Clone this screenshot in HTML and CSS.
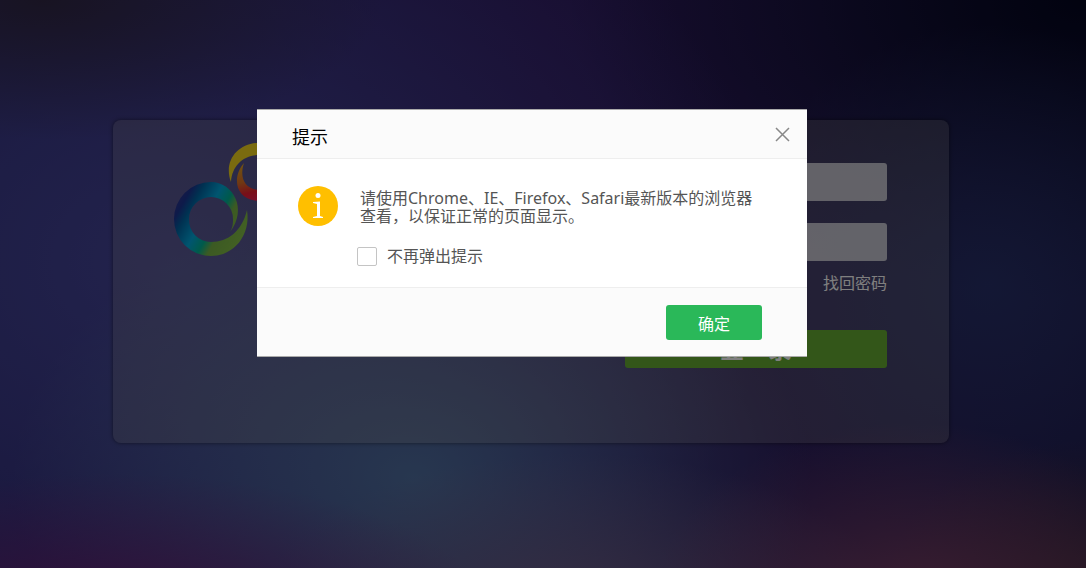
FILE: index.html
```
<!DOCTYPE html>
<html lang="zh-CN">
    <head>
        <meta charset="utf-8">
        <title>登录</title>
        <link rel="stylesheet" href="styles.css">
    </head>
    <body>
        <main class="page">
            <div class="login-box">
                <svg class="logo" viewBox="0 0 120 116" aria-hidden="true">
                    <defs>
                        <linearGradient id="blue" gradientUnits="userSpaceOnUse" x1="0" y1="0" x2="96" y2="55">
                            <stop offset="0.28" stop-color="#2c3590"/>
                            <stop offset="0.34" stop-color="#1c3494"/>
                            <stop offset="0.42" stop-color="#0064a4"/>
                            <stop offset="0.57" stop-color="#00aae0"/>
                            <stop offset="0.68" stop-color="#00b496"/>
                            <stop offset="0.76" stop-color="#78b446"/>
                            <stop offset="1" stop-color="#88c448"/>
                        </linearGradient>
                        <linearGradient id="red" gradientUnits="userSpaceOnUse" x1="66" y1="20" x2="76" y2="58">
                            <stop offset="0" stop-color="#e6aa20"/>
                            <stop offset="0.5" stop-color="#e07028"/>
                            <stop offset="0.8" stop-color="#f01e32"/>
                            <stop offset="1" stop-color="#f01e50"/>
                        </linearGradient>
                    </defs>
                    <path fill="url(#blue)" d="M56 89C59 84 59 80 59 76A22 22 0 0 0 37 54A22 22 0 0 0 15 76A22 22 0 0 0 37 99C54 99 68 88 73 67C77 92 60 113 37 113A37 37 0 0 1 0 76A37 37 0 0 1 37 39C59 39 74 66 56 89Z"/>
                    <path fill="#f5d71e" d="M57 39C49 18 64 0 85 0V12C70 12 58 22 57 39Z"/>
                    <path fill="url(#red)" d="M70 20C58 33 60 58 86 58V47C71 47 65 35 70 20Z"/>
                </svg>
                <form class="login-form">
                    <input class="field" type="text" aria-label="用户名">
                    <input class="field" type="password" aria-label="密码">
                    <a class="forgot" href="#">找回密码</a>
                    <button class="login-btn" type="button">登　录</button>
                </form>
            </div>
        </main>
        <div class="overlay">
            <section class="dialog" role="dialog" aria-labelledby="dialog-title">
                <header class="dialog-header">
                    <h2 class="dialog-title" id="dialog-title">提示</h2>
                    <button class="close" type="button" aria-label="关闭">
                        <svg width="15" height="15" viewBox="0 0 15 15"><path d="M1 1L14 14M14 1L1 14" stroke="#888" stroke-width="1.5"/></svg>
                    </button>
                </header>
                <div class="dialog-body">
                    <svg class="info" width="40" height="40" viewBox="0 0 40 40" aria-hidden="true">
                        <circle cx="20" cy="20" r="20" fill="#ffbf00"/>
                        <circle cx="20" cy="9.500" r="2.500" fill="#fff"/>
                        <path fill="#fff" d="M15 16L22 15.500V30L25 31V32H15V31L19 30V18L15 17Z"/>
                    </svg>
                    <div class="message">
                        <p class="text">请使用Chrome、IE、Firefox、Safari最新版本的浏览器查看，以保证正常的页面显示。</p>
                        <label class="no-more"><input class="check" type="checkbox">不再弹出提示</label>
                    </div>
                </div>
                <footer class="dialog-footer">
                    <button class="ok" type="button">确定</button>
                </footer>
            </section>
        </div>
    </body>
</html>
```
FILE: styles.css
```
*{
    box-sizing: border-box;
}
body{
    margin: 0;
    font-family: "Noto Sans", "Noto Sans CJK SC", sans-serif;
    font-size: 16px;
}
button,
input{
    font-family: inherit;
}

/* 登录页 */
.page{
    min-height: 100vh;
    padding: 120px 24px 0 0;
    background:
        radial-gradient(ellipse 260px 180px at 84% 106%, rgba(132,66,100,0.85), rgba(132,66,100,0)),
        radial-gradient(ellipse 200px 150px at 100% 104%, rgba(76,48,64,0.9), rgba(76,48,64,0)),
        radial-gradient(ellipse 380px 140px at 10% 108%, rgba(112,28,112,0.8), rgba(112,28,112,0)),
        radial-gradient(ellipse 320px 160px at 53% 108%, rgba(120,100,136,0.8), rgba(120,100,136,0)),
        radial-gradient(ellipse 400px 280px at 38% 84%, rgba(82,118,164,0.9), rgba(82,118,164,0)),
        radial-gradient(ellipse 340px 140px at 4% 0, rgba(48,38,62,0.9), rgba(48,38,62,0)),
        radial-gradient(ellipse 600px 460px at 16% 46%, rgba(72,74,160,0.9), rgba(72,74,160,0)),
        radial-gradient(ellipse 260px 260px at 91% 50%, rgba(40,52,110,0.8), rgba(40,52,110,0)),
        radial-gradient(ellipse 520px 300px at 100% 0, rgba(4,6,32,1), rgba(4,6,32,0)),
        linear-gradient(90deg, #2c2870 0, #301a60 50%, #2c1e5c 75%, #201c50 100%);
}
.login-box{
    display: flex;
    justify-content: space-between;
    max-width: 836px;
    min-height: 323px;
    margin: 0 auto;
    padding: 23px 62px 20px 61px;
    border-radius: 8px;
    background: rgba(156,150,142,0.25);
    box-shadow: 0 0 4px rgba(0,0,0,0.5);
}
.logo{
    width: 120px;
    height: 116px;
}
.login-form{
    display: flex;
    flex-direction: column;
    width: 262px;
    padding-top: 20px;
}
.field{
    height: 38px;
    margin-bottom: 22px;
    padding: 0 10px;
    border: 0;
    border-radius: 3px;
    background: rgba(255,255,255,0.7);
}
.forgot{
    align-self: flex-end;
    margin-top: -12px;
    line-height: 24px;
    color: #fff;
    text-decoration: none;
}
.login-btn{
    height: 38px;
    margin-top: 35px;
    padding: 0;
    border: 0;
    border-radius: 3px;
    background: #66ad33;
    color: #fff;
    font-size: 24px;
    font-weight: bold;
    line-height: 38px;
}

/* 提示弹窗 */
.overlay{
    position: fixed;
    inset: 0;
    padding: 109px 22px 0 0;
    background: rgba(0,0,0,0.5);
}
.dialog{
    max-width: 550px;
    margin: 0 auto;
    border: 1px solid #aaa;
    border-width: 1px 0;
    background: #fff;
    color: #555;
}
.dialog-header{
    display: flex;
    justify-content: space-between;
    align-items: center;
    height: 49px;
    padding: 0 17px 0 35px;
    border-bottom: 1px solid #eee;
    background: #fbfbfb;
}
.dialog-title{
    margin: 4px 0 0;
    color: #000;
    font-size: 18px;
    font-weight: normal;
}
.close{
    display: flex;
    padding: 0;
    border: 0;
    background: none;
}
.dialog-body{
    display: flex;
    gap: 22px;
    padding: 27px 45px 21px 41px;
}
.info{
    flex: none;
}
.message{
    flex: 1;
    padding-top: 3px;
}
.text{
    margin: 0 0 21px;
    line-height: 18px;
}
.no-more{
    display: flex;
    align-items: center;
    gap: 10px;
    margin-left: -3px;
    line-height: 20px;
}
.check{
    appearance: none;
    width: 20px;
    height: 19px;
    margin: 0;
    border: 1px solid #c4c4c4;
    border-radius: 2px;
    background: #fff;
}
.dialog-footer{
    display: flex;
    justify-content: flex-end;
    padding: 17px 45px 16px;
    border-top: 1px solid #eee;
    background: #fbfbfb;
}
.ok{
    width: 96px;
    height: 35px;
    padding: 0;
    border: 0;
    border-radius: 3px;
    background: #2ab859;
    color: #fff;
    font-size: 16px;
}
```
